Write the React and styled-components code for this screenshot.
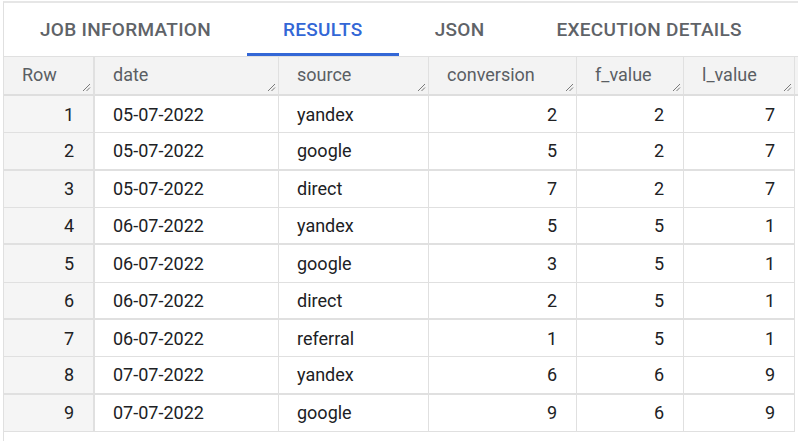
import React from "react";
import styled, { createGlobalStyle } from "styled-components";

const GlobalStyle = createGlobalStyle`
  html, body {
    margin: 0;
    padding: 0;
    background: #ffffff;
    font-family: Roboto, "Liberation Sans", Arial, sans-serif;
  }
`;

const Page = styled.div`
  width: 798px;
  height: 441px;
  overflow: hidden;
  padding: 1px 0 0 3px;
  box-sizing: border-box;
`;

const Panel = styled.div`
  border-top: 2px solid #e6e6e6;
  border-left: 1px solid #e0e0e0;
  height: 100%;
`;

const Tabs = styled.div`
  display: flex;
  height: 53px;
  border-bottom: 1px solid #e0e0e0;
`;

const Tab = styled.div`
  display: flex;
  align-items: center;
  padding: 0 36px;
  padding-top: 2px;
  box-sizing: border-box;
  font-size: 19px;
  font-weight: 500;
  letter-spacing: 0.3px;
  color: ${(p) => (p.$active ? "#3367d6" : "#5f6368")};
  border-bottom: 3px solid ${(p) => (p.$active ? "#3367d6" : "transparent")};
  white-space: nowrap;
`;

const Grid = styled.div`
  display: grid;
  grid-template-columns: 91px 184px 150px 148px 107px 111px 1fr;
`;

const HeadCell = styled.div`
  position: relative;
  height: 39px;
  box-sizing: border-box;
  background: #f3f3f3;
  color: #5a5e63;
  font-size: 18px;
  display: flex;
  align-items: center;
  padding: 0 18px 2px;
  border-bottom: 2px solid #dedede;
  border-right: ${(p) => (p.$thick ? "2px" : "1px")} solid
    ${(p) => (p.$none ? "transparent" : "#e0e0e0")};
`;

const Handle = styled.svg`
  position: absolute;
  right: 2px;
  bottom: 2px;
`;

const Cell = styled.div`
  height: 37.33px;
  box-sizing: border-box;
  display: flex;
  align-items: center;
  justify-content: ${(p) => (p.$num ? "flex-end" : "flex-start")};
  padding: 0 19px 0 18px;
  font-size: 18px;
  color: #202124;
  background: ${(p) => (p.$index ? "#f5f5f5" : "#ffffff")};
  border-bottom: ${(p) => (p.$even ? "2px" : "1px")} solid
    ${(p) => (p.$filler ? "transparent" : "#e0e0e0")};
  border-right: ${(p) => (p.$index ? "2px" : "1px")} solid
    ${(p) => (p.$filler ? "transparent" : "#e0e0e0")};
`;

const ResizeMark = () => (
  <Handle width="9" height="9" viewBox="0 0 9 9">
    <path d="M1 8 L8 1 M4.5 8 L8 4.5" stroke="#7a7a7a" strokeWidth="1" />
  </Handle>
);

const rows = [
  ["05-07-2022", "yandex", 2, 2, 7],
  ["05-07-2022", "google", 5, 2, 7],
  ["05-07-2022", "direct", 7, 2, 7],
  ["06-07-2022", "yandex", 5, 5, 1],
  ["06-07-2022", "google", 3, 5, 1],
  ["06-07-2022", "direct", 2, 5, 1],
  ["06-07-2022", "referral", 1, 5, 1],
  ["07-07-2022", "yandex", 6, 6, 9],
  ["07-07-2022", "google", 9, 6, 9],
];

const headers = ["Row", "date", "source", "conversion", "f_value", "l_value"];

function App() {
  return (
    <Page>
      <GlobalStyle />
      <Panel>
        <Tabs>
          <Tab>JOB INFORMATION</Tab>
          <Tab $active>RESULTS</Tab>
          <Tab>JSON</Tab>
          <Tab>EXECUTION DETAILS</Tab>
        </Tabs>
        <Grid>
          {headers.map((h, i) => (
            <HeadCell key={h} $thick={i === 0}>
              {h}
              <ResizeMark />
            </HeadCell>
          ))}
          <HeadCell $none />
          {rows.map((r, i) => {
            const even = i % 2 === 1;
            return (
              <React.Fragment key={i}>
                <Cell $index $num $even={even}>{i + 1}</Cell>
                <Cell $even={even}>{r[0]}</Cell>
                <Cell $even={even}>{r[1]}</Cell>
                <Cell $num $even={even}>{r[2]}</Cell>
                <Cell $num $even={even}>{r[3]}</Cell>
                <Cell $num $even={even}>{r[4]}</Cell>
                <Cell $filler />
              </React.Fragment>
            );
          })}
        </Grid>
      </Panel>
    </Page>
  );
}

export default App;
